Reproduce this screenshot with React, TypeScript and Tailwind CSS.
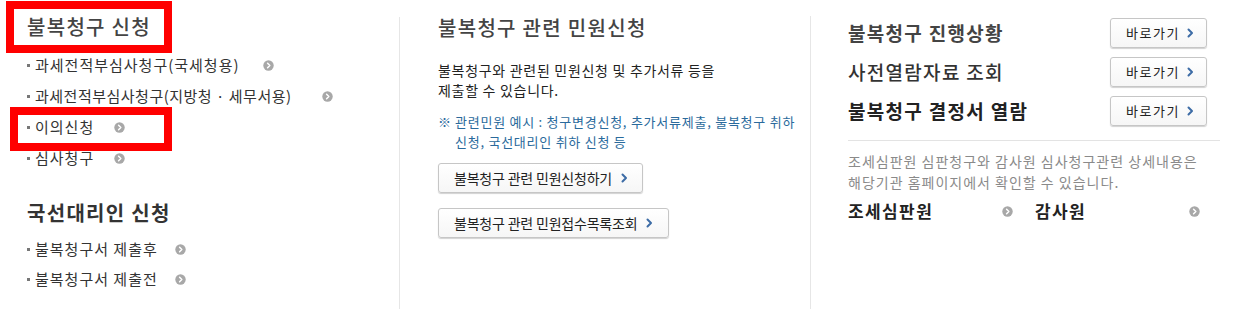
import type { ReactNode } from "react";

const font = { fontFamily: '"Noto Sans CJK KR", "Noto Sans", sans-serif' };

function CircleArrow() {
  return (
    <svg width="11" height="11" viewBox="0 0 11 11" className="shrink-0">
      <circle cx="5.5" cy="5.5" r="5.2" fill="#a8a8a8" />
      <path d="M4.6 3.3 L6.8 5.5 L4.6 7.7" fill="none" stroke="#fff" strokeWidth="1.5" strokeLinecap="round" strokeLinejoin="round" />
    </svg>
  );
}

function Chevron() {
  return (
    <svg width="7" height="10" viewBox="0 0 7 10" className="shrink-0">
      <path d="M1.5 1.5 L5 5 L1.5 8.5" fill="none" stroke="#3d6ca6" strokeWidth="2" strokeLinecap="round" strokeLinejoin="round" />
    </svg>
  );
}

function Btn({ children, className }: { children: ReactNode; className?: string }) {
  return (
    <a
      href="#"
      className={
        "flex h-[30px] items-center rounded-[3px] border border-[#c6c6c6] bg-gradient-to-b from-white to-[#f6f6f6] shadow-[0_1px_1px_rgba(0,0,0,0.18)] text-[14px] text-[#222] " +
        (className ?? "")
      }
    >
      {children}
    </a>
  );
}

const items1 = [
  { label: "과세전적부심사청구(국세청용)", gap: "ml-[23px]", track: "tracking-[1px]" },
  { label: "과세전적부심사청구(지방청 · 세무서용)", gap: "ml-[30px]", track: "tracking-[0.5px]" },
  { label: "이의신청", gap: "ml-[20px]", track: "tracking-[1px]", marked: true },
  { label: "심사청구", gap: "ml-[20px]", track: "tracking-[1px]" },
];

const items2 = [
  { label: "불복청구서 제출후", gap: "ml-[17px]", track: "tracking-[1px]" },
  { label: "불복청구서 제출전", gap: "ml-[17px]", track: "tracking-[1px]" },
];

function ListItem({ label, gap, track, marked, h }: { label: string; gap: string; track: string; marked?: boolean; h: string }) {
  return (
    <li className={"relative flex items-center pl-[27px] text-[15px] text-[#333] " + track + " " + h}>
      {marked && (
        <span className="pointer-events-none absolute left-[10px] top-[-5px] h-[44px] w-[162px] border-8 border-[#ff0000]" />
      )}
      <span className="mr-[5px] h-[3px] w-[3px] bg-[#777]" />
      <span>{label}</span>
      <span className={gap}>
        <CircleArrow />
      </span>
    </li>
  );
}

export default function App() {
  return (
    <div style={font} className="flex h-[309px] w-[1242px] overflow-hidden bg-white">
      {/* column 1 */}
      <div className="w-[399px] shrink-0">
        <div className="ml-[6px] mt-[1px] flex h-[52px] w-[166px] items-center border-8 border-[#ff0000] pl-[13px]">
          <h2 className="text-[20px] font-medium leading-[24px] tracking-[1.3px] text-[#444]">불복청구 신청</h2>
        </div>
        <ul className="mt-[-3.5px]">
          {items1.map((it) => (
            <ListItem key={it.label} {...it} h="h-[31px]" />
          ))}
        </ul>
        <h2 className="mt-[25px] pl-[27px] text-[20px] font-bold leading-[28px] tracking-[1.3px] text-[#333]">국선대리인 신청</h2>
        <ul className="mt-[8px]">
          {items2.map((it) => (
            <ListItem key={it.label} {...it} h="h-[30px]" />
          ))}
        </ul>
      </div>

      {/* column 2 */}
      <div className="mt-[17px] w-[411px] shrink-0 border-l border-[#e6e6e6] pl-[38px] pt-[1px]">
        <h2 className="text-[20px] font-medium leading-[20px] tracking-[1.3px] text-[#444]">불복청구 관련 민원신청</h2>
        <p className="mt-[22px] text-[14px] leading-[20px] tracking-[0.7px] text-[#222]">
          불복청구와 관련된 민원신청 및 추가서류 등을
          <br />
          제출할 수 있습니다.
        </p>
        <div className="mt-[12px] flex text-[13px] leading-[20px] tracking-[0.75px] text-[#2a6a9c]">
          <span className="w-[17px] shrink-0 tracking-normal">※</span>
          <span>
            관련민원 예시 : 청구변경신청, 추가서류제출, 불복청구 취하
            <br />
            신청, 국선대리인 취하 신청 등
          </span>
        </div>
        <Btn className="mt-[11px] w-[205px] pl-[15px] tracking-[-0.2px]">
          <span>불복청구 관련 민원신청하기</span>
          <span className="ml-[9px]">
            <Chevron />
          </span>
        </Btn>
        <Btn className="mt-[15px] w-[231px] pl-[15px] tracking-[-0.2px]">
          <span>불복청구 관련 민원접수목록조회</span>
          <span className="ml-[9px]">
            <Chevron />
          </span>
        </Btn>
      </div>

      {/* column 3 */}
      <div className="mt-[16px] flex-1 border-l border-[#e6e6e6] pl-[37px] pr-[22px] pt-[2px]">
        <div className="flex flex-col gap-[9px] pr-[13px]">
          {[
            { t: "불복청구 진행상황", c: "font-semibold text-[#444]" },
            { t: "사전열람자료 조회", c: "font-medium text-[#333]" },
            { t: "불복청구 결정서 열람", c: "font-bold text-[#222]" },
          ].map((r) => (
            <div key={r.t} className="flex items-center justify-between">
              <span className={"text-[19px] leading-[24px] tracking-[1.3px] " + r.c}>{r.t}</span>
              <Btn className="w-[97px] pl-[15px]">
                <span className="text-[13px] tracking-[1.5px]">바로가기</span>
                <span className="ml-[7px]">
                  <Chevron />
                </span>
              </Btn>
            </div>
          ))}
        </div>
        <div className="mt-[14px] border-t border-[#e3e3e3]" />
        <p className="mt-[10px] text-[14px] leading-[21px] tracking-[1px] text-[#8a8a8a]">
          조세심판원 심판청구와 감사원 심사청구관련 상세내용은
          <br />
          해당기관 홈페이지에서 확인할 수 있습니다.
        </p>
        <div className="mt-[6px] flex items-center text-[17px] font-bold leading-[24px] tracking-[1.4px] text-[#222]">
          <a href="#" className="flex w-[165px] items-center justify-between">
            <span>조세심판원</span>
            <CircleArrow />
          </a>
          <a href="#" className="ml-[22px] flex w-[165px] items-center justify-between">
            <span>감사원</span>
            <CircleArrow />
          </a>
        </div>
      </div>
    </div>
  );
}
